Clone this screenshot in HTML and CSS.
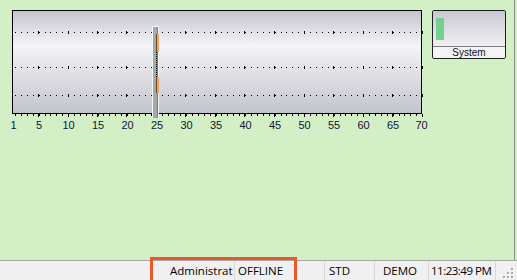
FILE: index.html
```html
<!DOCTYPE html>
<html>
<head>
<meta charset="utf-8">
<link rel="stylesheet" href="styles.css">
</head>
<body>
<div class="app">
  <div class="panel">
    <svg class="chart" width="430" height="132" viewBox="0 0 430 132" shape-rendering="crispEdges">
      <defs>
        <linearGradient id="bg" x1="0" y1="0" x2="0" y2="1">
          <stop offset="0" stop-color="#c4c4ce"/>
          <stop offset="0.34" stop-color="#f4f4f6"/>
          <stop offset="1" stop-color="#c3c3cd"/>
        </linearGradient>
      </defs>
      <rect x="12.5" y="10.5" width="409" height="103" fill="url(#bg)" stroke="#000"/>
      <g stroke="#000">
        <line x1="15" x2="422" y1="32.5" y2="32.5" stroke-dasharray="1 4.9"/>
        <line x1="15" x2="422" y1="67.5" y2="67.5" stroke-dasharray="1 4.9"/>
        <line x1="15" x2="422" y1="95.5" y2="95.5" stroke-dasharray="1 4.9"/>
        <line x1="38" x2="424" y1="32.5" y2="32.5" stroke-width="3" stroke-dasharray="1 28.5"/>
        <line x1="38" x2="424" y1="67.5" y2="67.5" stroke-width="3" stroke-dasharray="1 28.5"/>
        <line x1="38" x2="424" y1="95.5" y2="95.5" stroke-width="3" stroke-dasharray="1 28.5"/>
        <line x1="15" x2="422" y1="115" y2="115" stroke-width="2" stroke-dasharray="1 4.9"/>
        <line x1="38" x2="424" y1="115.5" y2="115.5" stroke-width="3" stroke-dasharray="1 28.5"/>
      </g>
      <g class="marker">
        <rect x="152" y="26" width="7" height="92" fill="#f6f8f8"/>
        <rect x="153" y="27" width="5" height="91" fill="#a2abab"/>
        <rect x="157" y="27" width="1" height="91" fill="#737b7b"/>
        <rect x="156" y="34" width="1" height="18" fill="#5a4a3a"/>
        <rect x="157" y="34" width="2" height="18" fill="#f2a456"/>
        <rect x="156" y="77" width="1" height="16" fill="#5a4a3a"/>
        <rect x="157" y="77" width="2" height="16" fill="#f2a456"/>
        <line x1="156.5" x2="156.5" y1="52" y2="77" stroke="#000" stroke-dasharray="1 1"/>
      </g>
      <g class="labels" text-anchor="middle">
        <text x="13.5" y="129">1</text>
        <text x="39" y="129">5</text>
        <text x="68.5" y="129">10</text>
        <text x="98" y="129">15</text>
        <text x="127.5" y="129">20</text>
        <text x="157" y="129">25</text>
        <text x="186.5" y="129">30</text>
        <text x="216" y="129">35</text>
        <text x="245.5" y="129">40</text>
        <text x="275" y="129">45</text>
        <text x="304.5" y="129">50</text>
        <text x="334" y="129">55</text>
        <text x="363.5" y="129">60</text>
        <text x="393" y="129">65</text>
        <text x="421.5" y="129">70</text>
      </g>
    </svg>
    <div class="sysbox">
      <div class="sys-top"><div class="sys-bar"></div></div>
      <div class="sys-label">System</div>
    </div>
  </div>
  <div class="status">
    <div class="cell c-user">Administrat</div>
    <div class="cell c-mode">OFFLINE</div>
    <div class="cell c-std">STD</div>
    <div class="cell c-demo">DEMO</div>
    <div class="cell c-time">11:23:49 PM</div>
    <div class="grip">
      <svg width="21" height="19" viewBox="0 0 21 19" shape-rendering="crispEdges">
        <g fill="#ffffff">
          <rect x="16" y="8" width="2" height="2"/>
          <rect x="12" y="12" width="2" height="2"/>
          <rect x="16" y="12" width="2" height="2"/>
          <rect x="8" y="16" width="2" height="2"/>
          <rect x="12" y="16" width="2" height="2"/>
          <rect x="16" y="16" width="2" height="2"/>
        </g>
        <g fill="#a8a8a8">
          <rect x="15" y="7" width="2" height="2"/>
          <rect x="11" y="11" width="2" height="2"/>
          <rect x="15" y="11" width="2" height="2"/>
          <rect x="7" y="15" width="2" height="2"/>
          <rect x="11" y="15" width="2" height="2"/>
          <rect x="15" y="15" width="2" height="2"/>
        </g>
      </svg>
    </div>
    <div class="highlight"></div>
  </div>
</div>
</body>
</html>
```

FILE: styles.css
```css
html, body {
  margin: 0;
  padding: 0;
}
body {
  width: 517px;
  height: 280px;
  overflow: hidden;
  background: #d3efc5;
}
.app {
  width: 517px;
  height: 280px;
  display: flex;
  flex-direction: column;
}
.panel {
  width: 514px;
  height: 260px;
  border-right: 1px solid #8c8c8c;
  display: flex;
  align-items: flex-start;
  background: #d3efc5;
}
.chart {
  display: block;
  flex: none;
}
.labels {
  font-family: "Liberation Sans", Arial, sans-serif;
  font-size: 11px;
  fill: #14143a;
}
.sysbox {
  margin-left: 2px;
  margin-top: 10px;
  width: 72px;
  height: 47px;
  border: 1px solid #1e1e1e;
  border-radius: 2px;
  display: flex;
  flex-direction: column;
  overflow: hidden;
}
.sys-top {
  height: 36px;
  border-bottom: 1px solid #7c7c7c;
  background: linear-gradient(#c8c8d2, #f0f0f3);
  padding: 7px 0 0 3px;
  box-sizing: border-box;
}
.sys-bar {
  width: 8px;
  height: 22px;
  background: #76d08d;
}
.sys-label {
  flex: 1;
  background: #f3f3f3;
  font-family: "Liberation Sans", Arial, sans-serif;
  font-size: 10px;
  line-height: 11px;
  text-align: center;
  color: #10102a;
}
.status {
  position: relative;
  height: 19px;
  border-top: 1px solid #a6a6a6;
  background: #f0f0f0;
  display: flex;
  font-family: "Open Sans", "Noto Sans", sans-serif;
  font-size: 11.5px;
  line-height: 19px;
  color: #000;
}
.cell {
  flex: none;
  border-right: 1px solid #d7d7d7;
  white-space: nowrap;
  overflow: hidden;
  box-sizing: content-box;
}
.c-user {
  margin-left: auto;
  width: 64px;
  padding-left: 4px;
}
.c-mode {
  width: 86px;
  padding-left: 3px;
}
.c-std {
  width: 45px;
  padding-left: 4px;
}
.c-demo {
  width: 45px;
  padding-left: 8px;
}
.c-time {
  width: 64px;
  padding-left: 2px;
  letter-spacing: -0.5px;
}
.grip {
  width: 21px;
  flex: none;
}
.grip svg {
  display: block;
}
.highlight {
  position: absolute;
  left: 150px;
  top: -4px;
  width: 141px;
  height: 24px;
  border: 3px solid #e9582b;
}
```
